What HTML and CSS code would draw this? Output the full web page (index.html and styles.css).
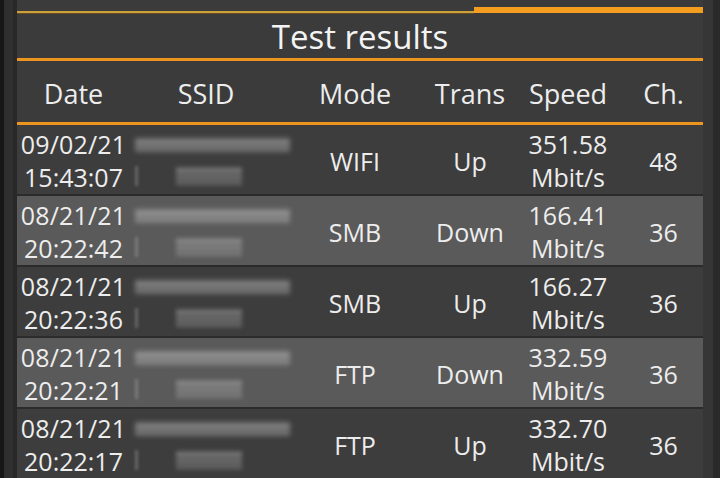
FILE: index.html
```html
<!DOCTYPE html>
<html>
<head>
<meta charset="utf-8">
<link rel="stylesheet" href="styles.css">
</head>
<body>
<div class="frame">
  <div class="edge-left"></div>
  <div class="panel">
    <div class="topbar"><div class="seg1"></div><div class="seg2"></div></div>
    <div class="title">Test results</div>
    <div class="rule"></div>
    <div class="grid head">
      <div class="c">Date</div>
      <div class="c">SSID</div>
      <div class="c">Mode</div>
      <div class="c">Trans</div>
      <div class="c">Speed</div>
      <div class="c">Ch.</div>
    </div>
    <div class="rule"></div>
    <div class="rows">
      <div class="grid row dark">
        <div class="c two"><span>09/02/21</span><span>15:43:07</span></div>
        <div class="ssid"><div class="b1"></div><div class="b2"><i></i><b></b></div></div>
        <div class="c">WIFI</div>
        <div class="c">Up</div>
        <div class="c two"><span>351.58</span><span>Mbit/s</span></div>
        <div class="c">48</div>
      </div>
      <div class="grid row light">
        <div class="c two"><span>08/21/21</span><span>20:22:42</span></div>
        <div class="ssid"><div class="b1"></div><div class="b2"><i></i><b></b></div></div>
        <div class="c">SMB</div>
        <div class="c">Down</div>
        <div class="c two"><span>166.41</span><span>Mbit/s</span></div>
        <div class="c">36</div>
      </div>
      <div class="grid row dark">
        <div class="c two"><span>08/21/21</span><span>20:22:36</span></div>
        <div class="ssid"><div class="b1"></div><div class="b2"><i></i><b></b></div></div>
        <div class="c">SMB</div>
        <div class="c">Up</div>
        <div class="c two"><span>166.27</span><span>Mbit/s</span></div>
        <div class="c">36</div>
      </div>
      <div class="grid row light">
        <div class="c two"><span>08/21/21</span><span>20:22:21</span></div>
        <div class="ssid"><div class="b1"></div><div class="b2"><i></i><b></b></div></div>
        <div class="c">FTP</div>
        <div class="c">Down</div>
        <div class="c two"><span>332.59</span><span>Mbit/s</span></div>
        <div class="c">36</div>
      </div>
      <div class="grid row dark">
        <div class="c two"><span>08/21/21</span><span>20:22:17</span></div>
        <div class="ssid"><div class="b1"></div><div class="b2"><i></i><b></b></div></div>
        <div class="c">FTP</div>
        <div class="c">Up</div>
        <div class="c two"><span>332.70</span><span>Mbit/s</span></div>
        <div class="c">36</div>
      </div>
    </div>
  </div>
  <div class="edge-right"></div>
</div>
</body>
</html>
```
FILE: styles.css
```css
html, body {
  margin: 0;
  padding: 0;
  background: #2a2a2a;
}
body {
  width: 720px;
  height: 478px;
  overflow: hidden;
  font-family: "Open Sans", "Noto Sans", sans-serif;
  color: #ededed;
}
.frame {
  display: flex;
  height: 478px;
}
.edge-left {
  flex: 0 0 17px;
  background: linear-gradient(to right, #161616 0, #161616 4px, #2e2e2e 4px, #303030 13px, #282828 13px, #282828 17px);
}
.edge-right {
  flex: 0 0 17px;
  background: linear-gradient(to right, #363636 0, #363636 10px, #2a2a2a 10px);
}
.panel {
  flex: 0 0 686px;
  background: #3b3b3b;
  display: flex;
  flex-direction: column;
}
.topbar {
  height: 16px;
  display: flex;
  align-items: flex-end;
  padding-bottom: 2px;
  box-sizing: border-box;
}
.seg1 {
  flex: 0 0 457px;
  height: 2px;
  background: #caa23c;
  box-shadow: 0 1px 0 #6a4a20;
}
.seg2 {
  flex: 1;
  height: 6px;
  background: #f49d1e;
}
.title {
  height: 43px;
  line-height: 43px;
  text-align: center;
  font-size: 33px;
  color: #f3f3f3;
}
.rule {
  height: 3px;
  background: #ec961f;
}
.grid {
  display: grid;
  grid-template-columns: 113px 152px 146px 84px 112px 79px;
}
.head {
  height: 63px;
  padding-top: 4px;
  box-sizing: border-box;
  font-size: 27px;
}
.c {
  display: flex;
  align-items: center;
  justify-content: center;
  text-align: center;
}
.rows {
  display: flex;
  flex-direction: column;
  gap: 2px;
  background: #2b2b2b;
}
.row {
  height: 69px;
  padding-top: 3px;
  box-sizing: border-box;
  font-size: 25px;
}
.row .two span:first-child { letter-spacing: 0.2px; }
.row.dark { background: #3d3d3d; }
.row.light { background: #5a5a5a; }
.two {
  flex-direction: column;
  line-height: 33px;
}
.ssid {
  display: flex;
  flex-direction: column;
  padding: 9px 0 0 5px;
  gap: 13px;
}
.b1 {
  width: 155px;
  height: 16px;
  background: linear-gradient(to bottom, rgba(200,200,200,0.1), rgba(230,230,230,0.5) 35%, rgba(170,170,170,0.25) 55%, rgba(220,220,220,0.45) 75%, rgba(160,160,160,0.05));
  filter: blur(2.5px);
}
.b2 {
  display: flex;
  align-items: stretch;
  height: 20px;
}
.b2 i {
  width: 3px;
  background: rgba(200,200,200,0.3);
  filter: blur(1.5px);
}
.b2 b {
  margin-left: 38px;
  width: 66px;
  background: linear-gradient(to bottom, rgba(200,200,200,0.05), rgba(220,220,220,0.45) 25%, rgba(150,150,150,0.15) 40%, rgba(220,220,220,0.4) 55%, rgba(150,150,150,0.15) 70%, rgba(210,210,210,0.35) 85%, rgba(150,150,150,0.05));
  filter: blur(2px);
}
```
